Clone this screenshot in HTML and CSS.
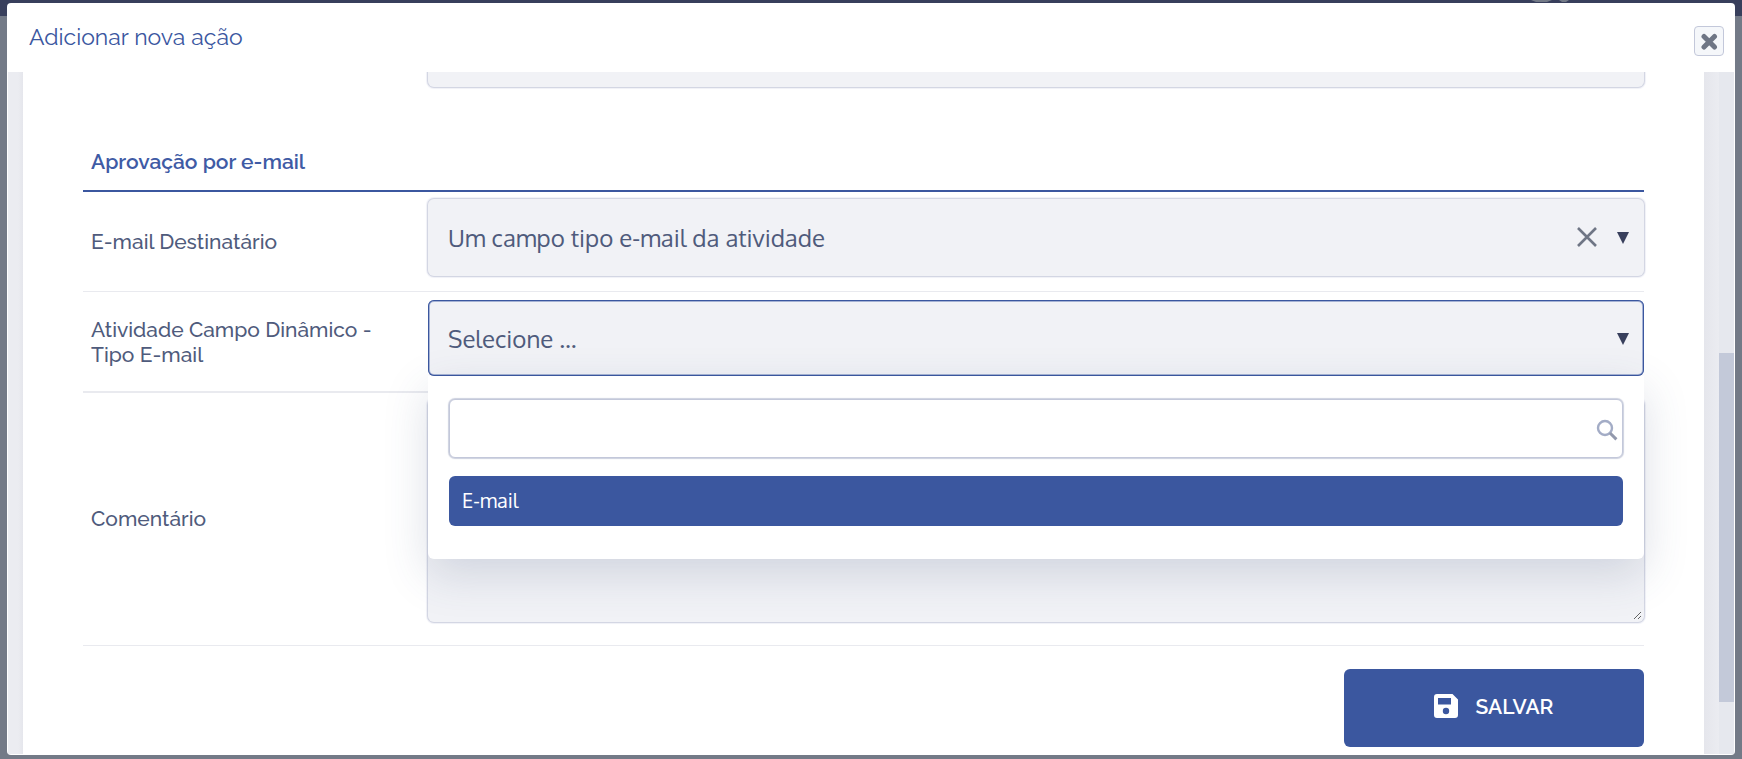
FILE: index.html
```html
<!DOCTYPE html>
<html lang="pt-BR">
<head>
<meta charset="utf-8">
<title>Adicionar nova ação</title>
<link rel="stylesheet" href="styles.css">
</head>
<body>
<div class="topbar">
  <svg class="topbar-mark" width="40" height="3" viewBox="0 0 40 3" aria-hidden="true"><path d="M0 0h21l-5 2H5zM28 0h10l-3 2h-4z" fill="#737a87"/></svg>
</div>
<main class="modal" role="dialog" aria-labelledby="modal-title">
  <header class="modal-header">
    <h1 class="modal-title" id="modal-title">Adicionar nova ação</h1>
    <button class="close" type="button" aria-label="Fechar">
      <svg width="18" height="18" viewBox="0 0 18 18" aria-hidden="true"><path d="M4 4.500l10.500 10.500M14.500 4.500l-10.500 10.500" stroke="#6f7685" stroke-width="5" stroke-linecap="round"/></svg>
    </button>
  </header>
  <div class="modal-body">
    <form class="sheet">
      <div class="row row-previous">
        <div></div>
        <div class="field"><select class="control" aria-label="Campo anterior"><option></option></select></div>
      </div>
      <h2 class="section">Aprovação por e-mail</h2>
      <div class="row row-recipient">
        <label class="label" for="recipient">E-mail Destinatário</label>
        <div class="field">
          <select class="control" id="recipient"><option>Um campo tipo e-mail da atividade</option></select>
          <button class="clear" type="button" aria-label="Limpar">
            <svg width="20" height="20" viewBox="0 0 20 20" aria-hidden="true"><path d="M1 1l18 18M19 1L1 19" stroke="#6f7685" stroke-width="2.600"/></svg>
          </button>
          <svg class="arrow" width="12" height="12" viewBox="0 0 12 12" aria-hidden="true"><path d="M0 0h12L6 12z" fill="#383f5c"/></svg>
        </div>
      </div>
      <div class="row row-dynamic">
        <label class="label" for="dynamic">Atividade Campo Dinâmico - Tipo E-mail</label>
        <div class="field">
          <select class="control control-open" id="dynamic"><option>Selecione ...</option></select>
          <svg class="arrow" width="12" height="12" viewBox="0 0 12 12" aria-hidden="true"><path d="M0 0h12L6 12z" fill="#383f5c"/></svg>
          <div class="dropdown">
            <div class="search">
              <input class="search-input" type="text" aria-label="Pesquisar">
              <svg class="search-icon" width="22" height="22" viewBox="0 0 22 22" aria-hidden="true"><circle cx="9" cy="9" r="7" fill="none" stroke="#a3acc6" stroke-width="2.4"/><path d="M14 14l6.4 6.4" stroke="#9299ad" stroke-width="3"/></svg>
            </div>
            <ul class="options" role="listbox" aria-label="Opções"><li class="option" role="option" aria-selected="true">E-mail</li></ul>
          </div>
        </div>
      </div>
      <div class="row row-comment">
        <label class="label" for="comment">Comentário</label>
        <div class="field"><textarea class="control comment" id="comment"></textarea></div>
      </div>
      <div class="actions">
        <button class="save" type="submit">
          <svg width="24" height="24" viewBox="0 0 24 24" aria-hidden="true"><path fill="#fff" fill-rule="evenodd" d="M3 0h15.500L24 5.500V21a3 3 0 0 1-3 3H3a3 3 0 0 1-3-3V3a3 3 0 0 1 3-3zM4 4v6.500h13V4zM12 13.800a3.200 3.200 0 1 0 0 6.400a3.200 3.200 0 1 0 0-6.400z"/></svg>
          <span>SALVAR</span>
        </button>
      </div>
    </form>
    <div class="scrollbar" aria-hidden="true"><div class="thumb"></div></div>
  </div>
</main>
</body>
</html>
```

FILE: styles.css
```css
* { box-sizing: border-box; }

body {
  margin: 0;
  height: 100vh;
  padding: 3px 7px 4px;
  background: #737a87;
  font-family: Raleway, Lato, "Open Sans", sans-serif;
  color: #4f5b7c;
  overflow: hidden;
}

.topbar {
  position: absolute;
  inset: 0 0 auto;
  height: 16px;
  display: flex;
  justify-content: flex-end;
  padding-right: 171px;
  background: #383f5c;
}

.modal {
  position: relative;
  height: 100%;
  display: flex;
  flex-direction: column;
  padding: 0 1px 1px;
  background: #fff;
  border-radius: 4px;
  overflow: hidden;
}

.modal-header {
  flex: none;
  height: 69px;
  display: flex;
  align-items: flex-start;
  justify-content: space-between;
  padding: 20px 10px 0 21px;
}

.modal-title {
  margin: 0;
  font-size: 23px;
  line-height: 28px;
  font-weight: 400;
  color: #3b579f;
}

.close {
  width: 30px;
  height: 30px;
  margin-top: 3px;
  padding: 0;
  display: grid;
  place-items: center;
  background: #f5f7fa;
  border: 1px solid #c3c8da;
  border-radius: 4px;
}

.modal-body {
  flex: 1;
  min-height: 0;
  display: flex;
  padding-left: 15px;
  background: linear-gradient(90deg, #ebecf1 0 10px, #e5e6ec 15px, #e5e6ec calc(100% - 30px), #ebecf1 calc(100% - 15px));
}

.sheet {
  flex: 1;
  margin-right: 15px;
  padding: 0 60px 7px;
  display: flex;
  flex-direction: column;
  justify-content: flex-end;
  background: #fff;
  overflow: hidden;
}

.scrollbar {
  flex: none;
  width: 15px;
  padding-top: 281px;
  padding-bottom: 52px;
  background: #e6e8ee;
}

.thumb {
  height: 100%;
  background: #c3c9d9;
}

.row {
  flex: none;
  display: grid;
  grid-template-columns: 345px 1fr;
  align-items: center;
  border-bottom: 1px solid #e9eaef;
}

.row-previous { border: 0; }
.row-recipient { padding: 7px 0 15px; }
.row-dynamic { padding: 8px 0 15px; border-bottom-width: 2px; }
.row-comment { padding: 6px 0 23px; }

.row .label { align-self: center; }
.row-recipient .label { margin-bottom: -8px; }
.row-dynamic .label { margin-bottom: -8px; }
.row-comment .label { margin-bottom: -16px; }

.section {
  flex: none;
  margin: 0;
  padding: 62px 8px 15px;
  font-size: 21px;
  line-height: 26px;
  font-weight: 600;
  color: #3f5ba5;
  border-bottom: 2px solid #3b579f;
}

.label {
  padding: 0 40px 0 8px;
  font-size: 21px;
  line-height: 25px;
  font-weight: 500;
}

.field {
  position: relative;
  display: flex;
}

.control {
  appearance: none;
  width: 100%;
  height: 77px;
  padding: 0 20px;
  border: 0;
  border-radius: 6px;
  background: #f1f2f6;
  box-shadow: 0 0 0 1px #d3d6e3, 0 0 1px 2px #f0f1f7;
  font-family: Oxygen, "Noto Sans", sans-serif;
  font-size: 24px;
  font-weight: 400;
  color: #4f5b7c;
  outline: none;
}

.control-open {
  height: 76px;
  box-shadow: inset 0 0 0 1px #3b579f, inset 0 0 0 2px #a5b2d4;
}

.comment {
  display: block;
  height: 223px;
  padding: 20px;
  border: 2px solid transparent;
  resize: vertical;
}

.clear {
  position: absolute;
  right: 47px;
  top: 28px;
  padding: 0;
  display: flex;
  border: 0;
  background: none;
}

.arrow {
  position: absolute;
  right: 15px;
  top: 33px;
}

.dropdown {
  position: absolute;
  z-index: 2;
  top: 100%;
  left: 0;
  right: 0;
  padding: 23px 21px 33px;
  background: #fff;
  border-radius: 0 0 6px 6px;
  box-shadow: 0 15px 45px rgba(60, 75, 115, 0.18);
}

.search { position: relative; }

.search-input {
  display: block;
  width: 100%;
  height: 59px;
  padding: 0 36px 0 12px;
  border: 1px solid #c3c8da;
  border-radius: 6px;
  box-shadow: 0 0 1px 1px #cdd1df;
  background: #fff;
  font-family: Oxygen, "Noto Sans", sans-serif;
  font-size: 20px;
  color: #4f5b7c;
  outline: none;
}

.search-icon {
  position: absolute;
  right: 5px;
  top: 20px;
}

.options {
  margin: 18px 0 0;
  padding: 0;
  list-style: none;
}

.option {
  padding: 0 13px 2px;
  font-family: Oxygen, "Noto Sans", sans-serif;
  font-size: 20px;
  line-height: 48px;
  color: #fff;
  background: #3b579f;
  border-radius: 6px;
}

.actions {
  flex: none;
  display: flex;
  justify-content: flex-end;
  padding-top: 23px;
}

.save {
  width: 300px;
  height: 78px;
  display: flex;
  align-items: center;
  justify-content: center;
  gap: 17px;
  padding: 0 0 4px;
  border: 0;
  border-radius: 6px;
  background: #3b579f;
  color: #fff;
  font-family: Raleway, Lato, sans-serif;
  font-size: 21px;
  font-weight: 600;
}
```
